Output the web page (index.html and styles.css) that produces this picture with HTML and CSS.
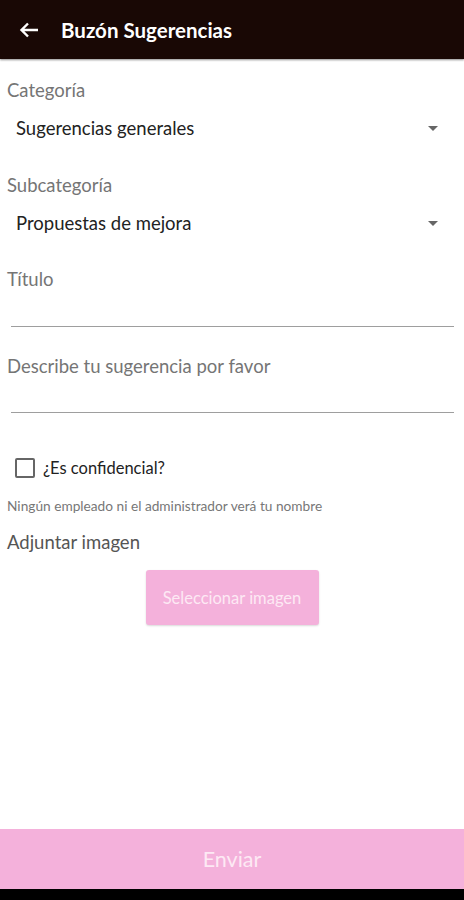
FILE: index.html
```html
<!DOCTYPE html>
<html lang="es">
<head>
  <meta charset="UTF-8" />
  <meta name="viewport" content="width=device-width, initial-scale=1" />
  <title>Buzón Sugerencias</title>
  <link rel="stylesheet" href="styles.css">
</head>
<body>
  <header class="barra">
    <svg class="atras" width="20" height="16" viewBox="0 0 20 16">
      <path d="M19 8H3M9 1.5L2.5 8L9 14.5" fill="none" stroke="#fff" stroke-width="2.4" />
    </svg>
    <h1>Buzón Sugerencias</h1>
  </header>

  <main class="formulario">
    <div class="campo">
      <label class="etiqueta">Categoría</label>
      <div class="selector">
        <span>Sugerencias generales</span>
        <span class="flecha"></span>
      </div>
    </div>

    <div class="campo">
      <label class="etiqueta">Subcategoría</label>
      <div class="selector">
        <span>Propuestas de mejora</span>
        <span class="flecha"></span>
      </div>
    </div>

    <div class="entrada titulo">
      <label class="etiqueta">Título</label>
      <div class="linea"></div>
    </div>

    <div class="entrada descripcion">
      <label class="etiqueta">Describe tu sugerencia por favor</label>
      <div class="linea"></div>
    </div>

    <div class="confidencial">
      <span class="casilla"></span>
      <span>¿Es confidencial?</span>
    </div>
    <p class="aviso">Ningún empleado ni el administrador verá tu nombre</p>

    <p class="adjuntar">Adjuntar imagen</p>
    <div class="centro">
      <button class="boton-imagen">Seleccionar imagen</button>
    </div>
  </main>

  <footer class="pie">
    <button class="boton-enviar">Enviar</button>
  </footer>
</body>
</html>
```

FILE: styles.css
```css
body {
  margin: 0;
  font-family: Lato, "Open Sans", sans-serif;
  background: #fff;
  width: 464px;
  height: 900px;
  display: flex;
  flex-direction: column;
  overflow: hidden;
}
.barra {
  height: 59px;
  background: #190805;
  display: flex;
  align-items: center;
  padding-left: 19px;
  box-shadow: 0 1px 2px rgba(0,0,0,0.45);
  flex-shrink: 0;
}
.atras {
  display: block;
  margin-top: 1px;
}
.barra h1 {
  margin: 0 0 0 22px;
  font-size: 20.5px;
  font-weight: bold;
  color: #fff;
}
.formulario {
  flex: 1;
  padding: 0 10px 0 7px;
}
.etiqueta {
  display: block;
  font-size: 18.5px;
  line-height: 24px;
  color: #757575;
}
.campo {
  padding-top: 19px;
}
.campo + .campo {
  padding-top: 25px;
}
.selector {
  display: flex;
  align-items: center;
  justify-content: space-between;
  margin-top: 6px;
  padding: 0 16px 0 9px;
  height: 40px;
  font-size: 18.5px;
  color: #222;
}
.flecha {
  width: 0;
  height: 0;
  border-left: 5.5px solid transparent;
  border-right: 5.5px solid transparent;
  border-top: 5.5px solid #666;
}
.titulo {
  padding-top: 24px;
}
.descripcion {
  padding-top: 27px;
}
.linea {
  margin: 35px 0 0 4px;
  border-bottom: 1.5px solid #9e9e9e;
}
.descripcion .linea {
  margin-top: 34px;
}
.confidencial {
  display: flex;
  align-items: center;
  gap: 8px;
  margin: 45px 0 0 8px;
  height: 20px;
  font-size: 16.5px;
  color: #222;
}
.casilla {
  width: 16px;
  height: 16px;
  border: 2px solid #666;
  border-radius: 2px;
}
.aviso {
  margin: 19px 0 0;
  font-size: 13.7px;
  line-height: 18px;
  color: #777;
}
.adjuntar {
  margin: 15px 0 0;
  font-size: 18.5px;
  line-height: 24px;
  color: #555;
}
.centro {
  display: flex;
  justify-content: center;
  margin: 16px -10px 0 -7px;
}
.boton-imagen {
  width: 173px;
  height: 55px;
  background: #f4b1db;
  border: none;
  border-radius: 3px;
  color: #fde9f4;
  font-family: Lato, sans-serif;
  font-size: 16.5px;
  box-shadow: 0 1px 2px rgba(0,0,0,0.15);
}
.pie {
  flex-shrink: 0;
  height: 71px;
  background: #000;
}
.boton-enviar {
  display: block;
  width: 100%;
  height: 60px;
  background: #f4b1db;
  border: none;
  color: #fde9f4;
  font-family: Lato, sans-serif;
  font-size: 21.5px;
}
```
